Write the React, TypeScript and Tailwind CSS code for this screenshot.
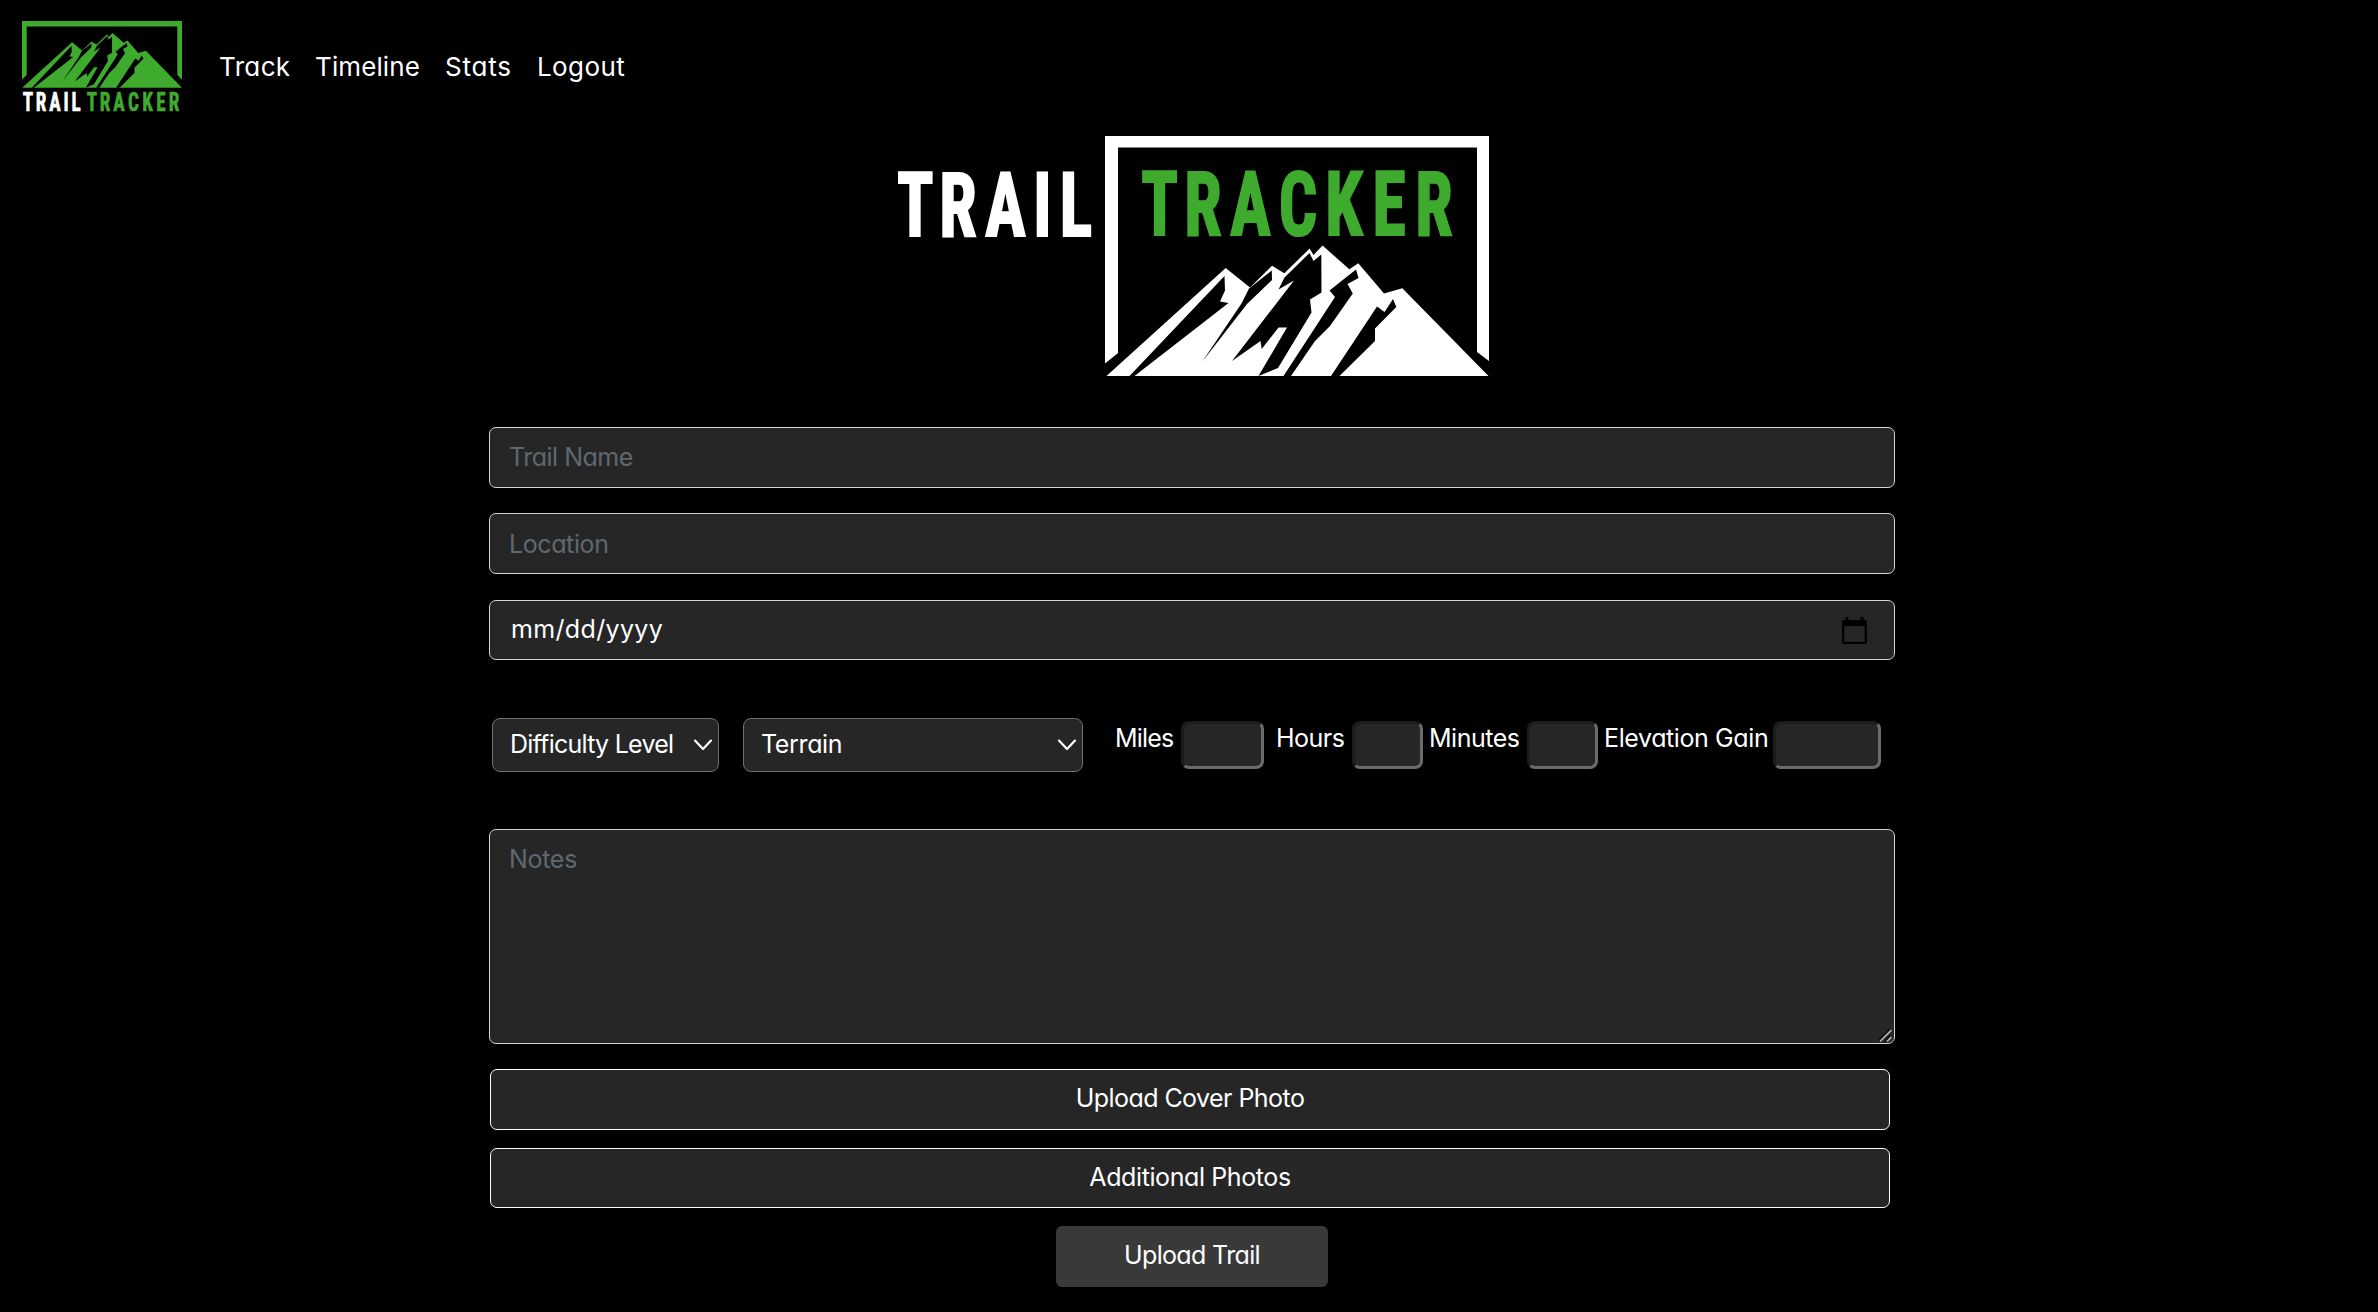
import type { ReactNode } from "react";

const GREEN = "#3fab2e";

/* Mountain silhouette with its dark ridges */
function Mountain({ color }: { color: string }) {
  return (
    <>
      <path
        fill={color}
        d="M6.5 116 L125.7 8 L150 27.6 L172 5.8 L184.3 13.2 L209.7 -11.5 L213.5 -5 L222.5 -14.5 L249.3 9.2 L258.3 3.3 L284 33.5 L302.3 28.2 L388.5 116 Z"
      />
      <g fill="#000">
        <path d="M124.5 16 L125 30.5 L120 41.5 L128.5 43 L34.5 116 L29.5 116 Z" />
        <path d="M171.8 10.5 L172 20 L147 44 L102 102 L141.5 43.500 L149 28.5 Z" />
        <path d="M209.5 -7 L213.5 1 L221.3 -5.5 L221.5 32.5 L210 39.5 L211.5 52.5 L178 108 L158.5 116 L187 67.5 L178.5 67.5 L161.7 89 L160.5 81 L132 101 L194 20.5 L178.5 29.5 L184.5 17.5 Z" />
        <path d="M256 9.5 L258.5 18 L247.5 24 L252.8 33.5 L230 66 L215 81 L191 116 L183.5 116 L235 37 L229.5 30.5 Z" />
        <path d="M293 39 L296.3 47 L275 68.5 L275 81 L239.5 116 L231 116 L277 46.5 L284.5 52 Z" />
      </g>
    </>
  );
}

function Letters({ x, y, size, squeeze, color, children }: { x: number[]; y: number; size: number; squeeze: number; color: string; children: string }) {
  return (
    <g transform={`scale(${squeeze} 1)`}>
      <text
        x={x.map((v) => v / squeeze).join(" ")}
        y={y}
        fontSize={size}
        fontWeight={700}
        textAnchor="middle"
        fill={color}
        stroke={color}
        strokeWidth={size * 0.024}
        fontFamily="'Roboto Condensed', Roboto, sans-serif"
      >
        {children}
      </text>
    </g>
  );
}

function SmallLogo() {
  return (
    <svg className="h-[100px] w-[160px] shrink-0" viewBox="22 21 160 100">
      <path fill={GREEN} d="M22 21H182V79.5L177.3 75V26.5H26.7V75L22 79.5Z" />
      <g transform="translate(19.5 39) scale(.418 .42)">
        <Mountain color={GREEN} />
      </g>
      <Letters x={[28, 41, 55, 66, 76]} y={111} size={25.5} squeeze={0.75} color="#fff">TRAIL</Letters>
      <Letters x={[92, 105, 119, 133.5, 147.5, 161, 174]} y={111} size={25.5} squeeze={0.75} color={GREEN}>TRACKER</Letters>
    </svg>
  );
}

function HeroLogo() {
  return (
    <svg className="h-[240px] w-[592px]" viewBox="898 136 592 240">
      <path fill="#fff" d="M1105 136H1489V361L1477 352V147.5H1118V353L1105 363.5Z" />
      <g transform="translate(1100 260)">
        <Mountain color="#fff" />
      </g>
      <Letters x={[915, 958, 1005.5, 1042.5, 1076]} y={236.3} size={89} squeeze={0.76} color="#fff">TRAIL</Letters>
      <Letters x={[1159.6, 1203, 1250.4, 1298, 1344, 1389, 1434]} y={235.5} size={89} squeeze={0.76} color={GREEN}>TRACKER</Letters>
    </svg>
  );
}

function Chevron() {
  return (
    <svg className="h-[12px] w-[20px]" viewBox="0 0 20 12" fill="none" stroke="#fff" strokeWidth="2.2" strokeLinecap="round" strokeLinejoin="round">
      <path d="M2 1.6 10 10 18 1.6" />
    </svg>
  );
}

function Select({ className, children }: { className: string; children: ReactNode }) {
  return (
    <button className={`flex h-[54px] items-center justify-between rounded-[8px] border border-[#707070] bg-[#262626] pl-[17px] pr-[5px] ${className}`}>
      {children}
      <Chevron />
    </button>
  );
}

function NumberBox({ label, labelClass, boxClass }: { label: string; labelClass: string; boxClass: string }) {
  return (
    <label className="flex h-[48px]">
      <span className={`block shrink-0 whitespace-nowrap pl-px leading-[34px] ${labelClass}`}>{label}</span>
      <input
        className={`block h-[48px] shrink-0 rounded-[8px] border-[3px] border-b-[#6b6b6b] border-l-[#1c1c1c] border-r-[#6b6b6b] border-t-[#1c1c1c] bg-[#262626] ${boxClass}`}
      />
    </label>
  );
}

const field =
  "block w-full rounded-[7px] border border-[#ced4da] bg-[#262626] px-[19px] text-[25px] placeholder:text-[#5f686f] placeholder:opacity-100";

export default function App() {
  return (
    <div className="h-[1312px] w-[2378px] overflow-hidden bg-black font-[Inter,sans-serif] text-[25px] text-white [font-feature-settings:'cv11']">
      <header className="flex h-[136px] pl-[22px] pt-[21px]">
        <SmallLogo />
        <nav className="ml-[37px] flex h-[91px] items-center gap-[24px] text-[26px]">
          <a className="w-[72px] tracking-[0.35px]">Track</a>
          <a className="w-[106px] tracking-[0.1px]">Timeline</a>
          <a className="w-[68px] tracking-[0.8px]">Stats</a>
          <a className="w-[90px] tracking-[0.4px]">Logout</a>
        </nav>
      </header>

      <main className="ml-[489px] flex w-[1406px] flex-col">
        <div className="pl-[409px]">
          <HeroLogo />
        </div>

        <input className={`${field} mt-[51px] h-[61px] pb-[2px] tracking-[-0.5px]`} placeholder="Trail Name" />
        <input className={`${field} mt-[25px] h-[61px] tracking-[-0.4px]`} placeholder="Location" />
        <div className={`${field} mt-[26px] flex h-[60px] items-center justify-between pr-[27px]`}>
          <span className="pl-[2px] tracking-[0.35px]">mm/dd/yyyy</span>
          <svg className="h-[27px] w-[25px]" viewBox="0 0 25 27">
            <path fill="#000" d="M3.5 0h3v3h12V0h3v3H23a2 2 0 0 1 2 2v20a2 2 0 0 1-2 2H2a2 2 0 0 1-2-2V5a2 2 0 0 1 2-2h1.500zM2.300 9v15.700h20.400V9z" />
          </svg>
        </div>

        <div className="mt-[58px] flex h-[54px] pl-[3px]">
          <Select className="w-[227px] tracking-[-0.75px]">Difficulty Level</Select>
          <Select className="ml-[24px] w-[340px] tracking-[-0.35px]">Terrain</Select>
          <div className="ml-[31px] flex pt-[3px]">
            <NumberBox label="Miles" labelClass="w-[67px] tracking-[-0.8px]" boxClass="w-[83px]" />
            <div className="w-[11px]" />
            <NumberBox label="Hours" labelClass="w-[77px] tracking-[-0.5px]" boxClass="w-[71px]" />
            <div className="w-[5px]" />
            <NumberBox label="Minutes" labelClass="w-[99px] tracking-[-0.5px]" boxClass="w-[71px]" />
            <div className="w-[5px]" />
            <NumberBox label="Elevation Gain" labelClass="w-[170px] tracking-[-0.4px]" boxClass="w-[108px]" />
          </div>
        </div>

        <div className="relative mt-[57px] h-[215px]">
          <textarea className={`${field} h-[215px] resize-none pt-[11px] leading-[36px] tracking-[-0.3px]`} placeholder="Notes" />
          <svg className="absolute bottom-[2px] right-[3px] h-[13px] w-[13px]" viewBox="0 0 13 13" strokeWidth="1.8">
            <path stroke="#000" d="M0 11.500 11.500 0M7 11.500l4.500-4.500" />
            <path stroke="#aaa" d="M1 12.500 12.500 1M8 12.500l4.500-4.500" />
          </svg>
        </div>

        <button className="ml-px mt-[25px] h-[61px] w-[1400px] rounded-[7px] border border-white bg-[#262626] pb-[1px] tracking-[-0.55px]">Upload Cover Photo</button>
        <button className="ml-px mt-[18px] h-[60px] w-[1400px] rounded-[7px] border border-white bg-[#262626] tracking-[-0.4px]">Additional Photos</button>
        <button className="ml-[567px] mt-[18px] h-[61px] w-[272px] rounded-[6px] bg-[#393939] pb-[1px] tracking-[-0.65px]">Upload Trail</button>
      </main>
    </div>
  );
}
